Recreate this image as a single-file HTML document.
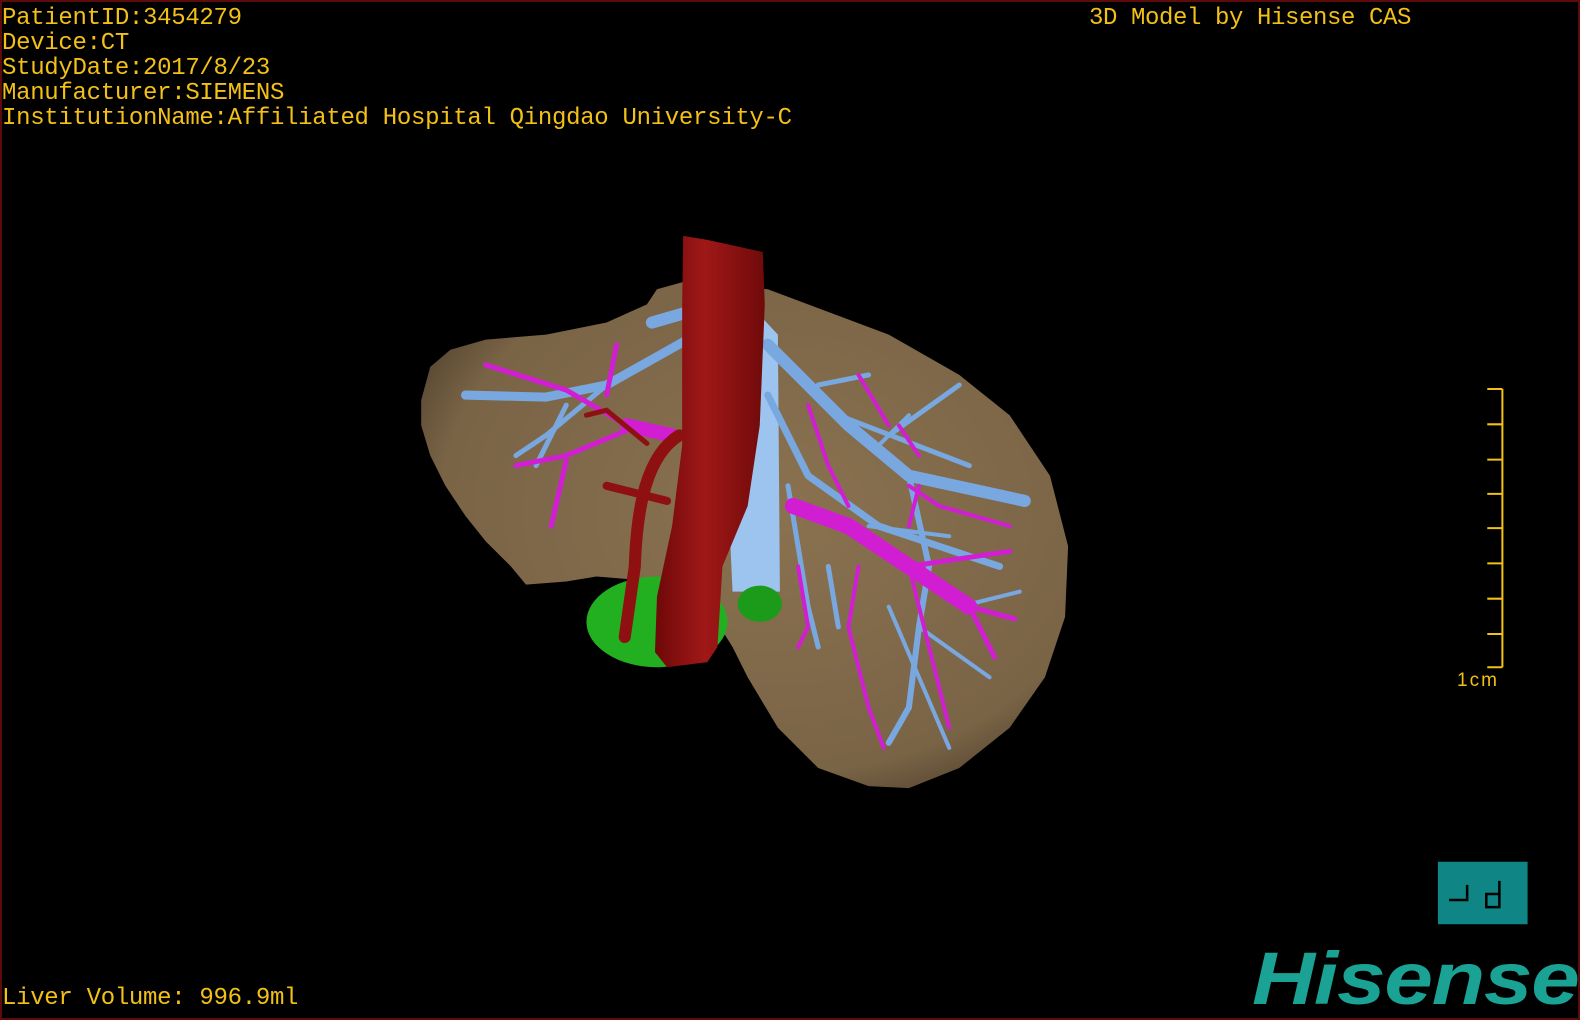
<!DOCTYPE html>
<html><head><meta charset="utf-8"><style>
html,body{margin:0;padding:0;background:#000;}
#s{position:relative;width:1580px;height:1020px;overflow:hidden;background:#000;box-sizing:border-box;border:2px solid #5e0b0b;}
.t{position:absolute;color:#f2c017;font-family:"Liberation Mono",monospace;font-size:24px;line-height:25px;white-space:pre;letter-spacing:-0.3px;}
svg{position:absolute;left:0;top:0;}
</style></head><body><div id="s">
<svg width="1580" height="1020" viewBox="0 0 1568 1012" preserveAspectRatio="none">
<defs>
<radialGradient id="lv" cx="0.55" cy="0.45" r="0.65"><stop offset="0" stop-color="#8a7250"/><stop offset="0.8" stop-color="#7a6446"/><stop offset="1" stop-color="#4d3f2c"/></radialGradient>
<linearGradient id="ao" x1="0" x2="1"><stop offset="0" stop-color="#6e0808"/><stop offset="0.45" stop-color="#a01818"/><stop offset="1" stop-color="#700a0a"/></linearGradient>
</defs>
<path fill="url(#lv)" d="M416,395 L425,362 445,345 480,335 540,330 600,318 640,300 650,285 675,278 760,285 800,300 880,330 950,370 1000,410 1040,470 1058,540 1055,610 1035,670 1000,720 950,760 900,780 860,778 810,760 770,720 740,670 725,640 700,600 650,575 590,570 560,575 520,578 505,560 480,535 460,510 440,480 425,450 416,420Z"/>
<polygon fill="#9cc4ee" points="742,300 770,330 772,585 725,585 722,520 745,440"/>
<ellipse cx="650" cy="615" rx="70" ry="45" fill="#22b020"/>
<ellipse cx="752" cy="597" rx="22" ry="18" fill="#1c9a1a"/>
<g fill="none" stroke-linecap="round" stroke-linejoin="round" stroke="#79a8e0">
<path stroke-width="12" d="M760,340 L840,420 900,470 1015,495"/>
<path stroke-width="5" d="M830,410 L960,460"/>
<path stroke-width="7" d="M760,390 L800,470 870,520 990,560"/>
<path stroke-width="6" d="M900,470 L920,560 910,620 900,700 880,735"/>
<path stroke-width="4" d="M880,600 L940,740 M910,620 L980,670 M860,520 L940,530 M950,600 L1010,585 M870,440 L900,410"/>
<path stroke-width="9" d="M680,335 L600,380 540,392 460,390"/>
<path stroke-width="5" d="M600,380 L540,430 510,450 M560,400 L530,460"/>
<path stroke-width="12" d="M690,305 L645,318"/>
<path stroke-width="5" d="M780,480 L800,600 810,640 M810,380 L860,370 M950,380 L880,430 M820,560 L830,620"/>
</g>
<g fill="none" stroke-linecap="round" stroke-linejoin="round" stroke="#d21ed2">
<path stroke-width="16" d="M785,500 L840,520 900,560 960,600"/>
<path stroke-width="5" d="M960,600 L1005,612 M900,560 L1000,545 M960,600 L985,650"/>
<path stroke-width="4" d="M900,560 L920,640 940,720 M850,560 L840,620 860,700 875,740 M800,400 L820,460 840,500 M900,480 L930,500 1000,520 M790,560 L800,620 790,640 M890,420 L910,450 M850,370 L880,420 M910,480 L900,520"/>
<path stroke-width="14" d="M665,430 L620,420"/>
<path stroke-width="5" d="M620,420 L560,385 480,360 M620,425 L560,450 510,460 M560,455 L545,520 M600,390 L610,340"/>
</g>
<path fill="url(#ao)" d="M676,232 L700,236 755,248 757,300 752,420 740,500 715,560 710,640 700,655 660,660 648,645 650,590 665,520 675,440 675,300Z"/>
<path fill="none" stroke="#8f1010" stroke-width="12" stroke-linecap="round" d="M672,430 C640,450 630,500 628,560 L618,630"/>
<path fill="none" stroke="#8f1010" stroke-width="8" stroke-linecap="round" d="M600,480 L660,495"/>
<path fill="none" stroke="#8f1010" stroke-width="5" stroke-linecap="round" d="M640,438 L600,405 580,410"/>
<line x1="1489" y1="384" x2="1489" y2="660" stroke="#f2c017" stroke-width="2"/>
<path stroke="#f2c017" stroke-width="2" d="M1474,384H1489M1474,419H1489M1474,454H1489M1474,488H1489M1474,522H1489M1474,557H1489M1474,592H1489M1474,627H1489M1474,660H1489"/>
<rect x="1425" y="853" width="89" height="62" fill="#0f8585"/>
<path d="M1436,891H1454V876M1486,872V898H1473V885H1486" fill="none" stroke="#000" stroke-width="2.5"/>
</svg>
<div class="t" style="left:0;top:4px">PatientID:3454279
Device:CT
StudyDate:2017/8/23
Manufacturer:SIEMENS
InstitutionName:Affiliated Hospital Qingdao University-C</div>
<div class="t" style="left:1087px;top:4px;font-size:24px;letter-spacing:-0.4px">3D Model by Hisense CAS</div>
<div class="t" style="left:0;top:984px;font-size:24px;letter-spacing:-0.3px">Liver Volume: 996.9ml</div>
<div style="position:absolute;left:1455px;top:668px;color:#f2c017;font-family:'Liberation Sans',sans-serif;font-size:19px;letter-spacing:2px;">1cm</div>
<div style="position:absolute;left:1250px;top:937px;color:#1aa395;font-family:'Liberation Sans',sans-serif;font-weight:bold;font-style:italic;font-size:74px;letter-spacing:-1px;line-height:80px;transform-origin:0 0;transform:scaleX(1.18);">Hisense</div>
</div></body></html>
